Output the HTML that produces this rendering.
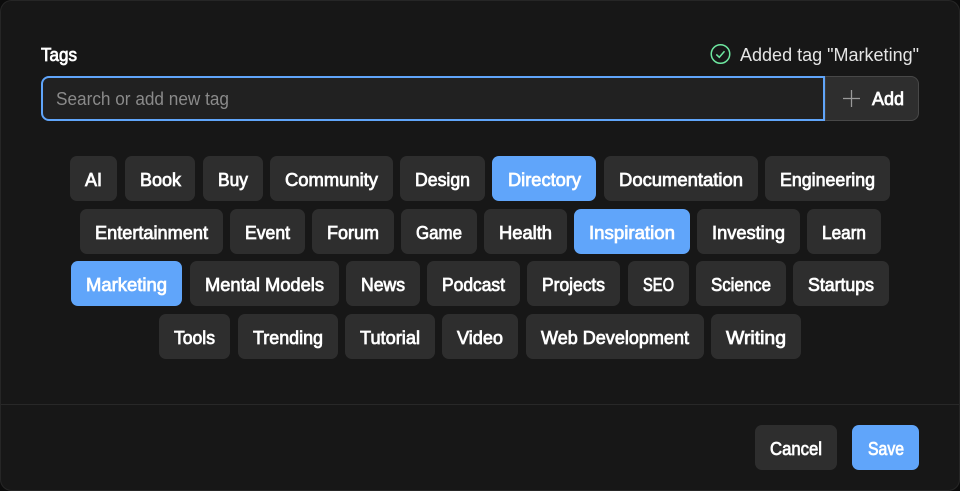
<!DOCTYPE html>
<html lang="en"><head><meta charset="utf-8"><title>Tags</title>
<style>
html,body{margin:0;padding:0;background:#0c0c0c;width:960px;height:491px;overflow:hidden}
svg{display:block}
text{font-family:"Liberation Sans",sans-serif;font-size:18px;fill:#fff}
.b{font-weight:400;stroke:#fff;stroke-width:.75px}
.t{fill:#2e2e2e}
.s{fill:#60a5fa}
</style></head><body>
<svg width="960" height="491" viewBox="0 0 960 491" xmlns="http://www.w3.org/2000/svg">
<rect x="0.5" y="0.5" width="959" height="490" rx="11" fill="#171717" stroke="#262626"/>
<rect x="1" y="404" width="958" height="1" fill="#282828"/>
<text class="b" x="41" y="61" textLength="36" lengthAdjust="spacingAndGlyphs">Tags</text>
<circle cx="720.5" cy="54" r="9.25" fill="none" stroke="#6ee7a0" stroke-width="1.5"/>
<path d="M716.3 54.4l3 2.9 5.2-6" fill="none" stroke="#6ee7a0" stroke-width="1.5"/>
<text x="740" y="61" textLength="179" lengthAdjust="spacingAndGlyphs" style="fill:#e5e5e5">Added tag "Marketing"</text>

<path d="M825 76.5h86a7.5 7.5 0 0 1 7.5 7.5v29a7.5 7.5 0 0 1-7.5 7.5h-86z" fill="#2e2e2e" stroke="#484848"/>
<path d="M49 77h775v43H49a7 7 0 0 1-7-7V84a7 7 0 0 1 7-7z" fill="#212121" stroke="#60a5fa" stroke-width="2"/>
<text x="56" y="105" textLength="173" lengthAdjust="spacingAndGlyphs" style="fill:#8a8a8a">Search or add new tag</text>
<path d="M843 98.5h17M851.5 90v17" stroke="#9a9a9a" stroke-width="1.25" fill="none"/>
<text class="b" x="872" y="105" textLength="32" lengthAdjust="spacingAndGlyphs">Add</text>

<g text-anchor="start">
<rect class="t" x="70" y="156" width="47" height="45" rx="7"/><text class="b" x="85" y="186" textLength="17" lengthAdjust="spacingAndGlyphs">AI</text>
<rect class="t" x="125" y="156" width="70" height="45" rx="7"/><text class="b" x="140" y="186" textLength="41" lengthAdjust="spacingAndGlyphs">Book</text>
<rect class="t" x="203" y="156" width="60" height="45" rx="7"/><text class="b" x="218" y="186" textLength="30" lengthAdjust="spacingAndGlyphs">Buy</text>
<rect class="t" x="270" y="156" width="123" height="45" rx="7"/><text class="b" x="285" y="186" textLength="93" lengthAdjust="spacingAndGlyphs">Community</text>
<rect class="t" x="400" y="156" width="85" height="45" rx="7"/><text class="b" x="415" y="186" textLength="55" lengthAdjust="spacingAndGlyphs">Design</text>
<rect class="s" x="492" y="156" width="104" height="45" rx="7"/><text class="b" x="508" y="186" textLength="73" lengthAdjust="spacingAndGlyphs">Directory</text>
<rect class="t" x="604" y="156" width="154" height="45" rx="7"/><text class="b" x="619" y="186" textLength="124" lengthAdjust="spacingAndGlyphs">Documentation</text>
<rect class="t" x="765" y="156" width="125" height="45" rx="7"/><text class="b" x="780" y="186" textLength="95" lengthAdjust="spacingAndGlyphs">Engineering</text>

<rect class="t" x="80" y="209" width="143" height="45" rx="7"/><text class="b" x="95" y="239" textLength="113" lengthAdjust="spacingAndGlyphs">Entertainment</text>
<rect class="t" x="230" y="209" width="75" height="45" rx="7"/><text class="b" x="245" y="239" textLength="45" lengthAdjust="spacingAndGlyphs">Event</text>
<rect class="t" x="312" y="209" width="82" height="45" rx="7"/><text class="b" x="327" y="239" textLength="52" lengthAdjust="spacingAndGlyphs">Forum</text>
<rect class="t" x="401" y="209" width="76" height="45" rx="7"/><text class="b" x="416" y="239" textLength="46" lengthAdjust="spacingAndGlyphs">Game</text>
<rect class="t" x="484" y="209" width="83" height="45" rx="7"/><text class="b" x="499" y="239" textLength="53" lengthAdjust="spacingAndGlyphs">Health</text>
<rect class="s" x="574" y="209" width="116" height="45" rx="7"/><text class="b" x="589" y="239" textLength="86" lengthAdjust="spacingAndGlyphs">Inspiration</text>
<rect class="t" x="697" y="209" width="103" height="45" rx="7"/><text class="b" x="712" y="239" textLength="73" lengthAdjust="spacingAndGlyphs">Investing</text>
<rect class="t" x="807" y="209" width="74" height="45" rx="7"/><text class="b" x="822" y="239" textLength="44" lengthAdjust="spacingAndGlyphs">Learn</text>

<rect class="s" x="71" y="261" width="111" height="45" rx="7"/><text class="b" x="86" y="291" textLength="81" lengthAdjust="spacingAndGlyphs">Marketing</text>
<rect class="t" x="190" y="261" width="149" height="45" rx="7"/><text class="b" x="205" y="291" textLength="119" lengthAdjust="spacingAndGlyphs">Mental Models</text>
<rect class="t" x="346" y="261" width="74" height="45" rx="7"/><text class="b" x="361" y="291" textLength="44" lengthAdjust="spacingAndGlyphs">News</text>
<rect class="t" x="427" y="261" width="93" height="45" rx="7"/><text class="b" x="442" y="291" textLength="63" lengthAdjust="spacingAndGlyphs">Podcast</text>
<rect class="t" x="527" y="261" width="93" height="45" rx="7"/><text class="b" x="542" y="291" textLength="63" lengthAdjust="spacingAndGlyphs">Projects</text>
<rect class="t" x="628" y="261" width="61" height="45" rx="7"/><text class="b" x="643" y="291" textLength="31" lengthAdjust="spacingAndGlyphs">SEO</text>
<rect class="t" x="696" y="261" width="90" height="45" rx="7"/><text class="b" x="711" y="291" textLength="60" lengthAdjust="spacingAndGlyphs">Science</text>
<rect class="t" x="793" y="261" width="96" height="45" rx="7"/><text class="b" x="808" y="291" textLength="66" lengthAdjust="spacingAndGlyphs">Startups</text>

<rect class="t" x="159" y="314" width="71" height="45" rx="7"/><text class="b" x="174" y="344" textLength="41" lengthAdjust="spacingAndGlyphs">Tools</text>
<rect class="t" x="238" y="314" width="100" height="45" rx="7"/><text class="b" x="253" y="344" textLength="70" lengthAdjust="spacingAndGlyphs">Trending</text>
<rect class="t" x="345" y="314" width="90" height="45" rx="7"/><text class="b" x="360" y="344" textLength="60" lengthAdjust="spacingAndGlyphs">Tutorial</text>
<rect class="t" x="442" y="314" width="76" height="45" rx="7"/><text class="b" x="457" y="344" textLength="46" lengthAdjust="spacingAndGlyphs">Video</text>
<rect class="t" x="526" y="314" width="178" height="45" rx="7"/><text class="b" x="541" y="344" textLength="148" lengthAdjust="spacingAndGlyphs">Web Development</text>
<rect class="t" x="711" y="314" width="90" height="45" rx="7"/><text class="b" x="726" y="344" textLength="60" lengthAdjust="spacingAndGlyphs">Writing</text>

<rect class="t" x="755" y="425" width="82" height="45" rx="7"/><text class="b" x="770" y="455" textLength="52" lengthAdjust="spacingAndGlyphs">Cancel</text>
<rect class="s" x="852" y="425" width="67" height="45" rx="7"/><text class="b" x="868" y="455" textLength="36" lengthAdjust="spacingAndGlyphs">Save</text>
</g>
</svg>
</body></html>
